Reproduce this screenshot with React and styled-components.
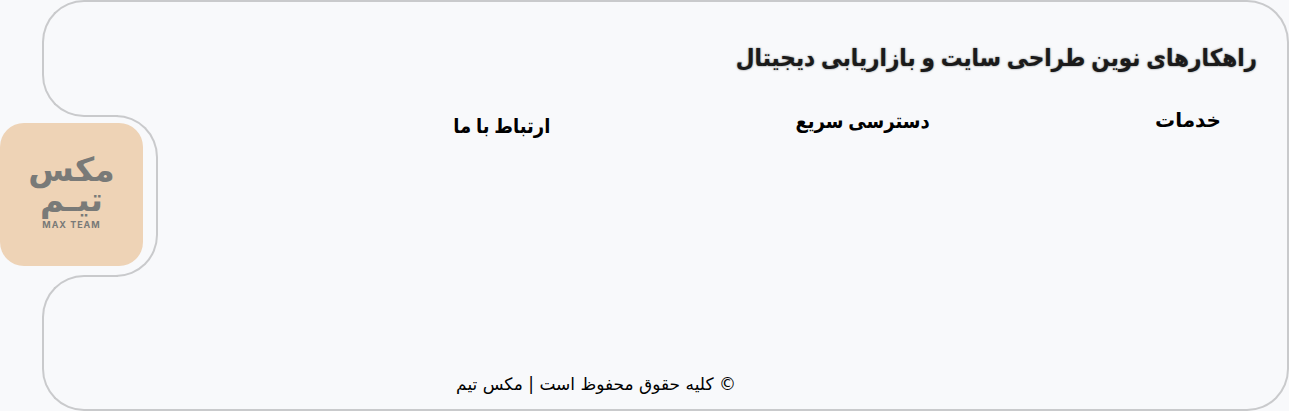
import React from "react";
import styled, { createGlobalStyle } from "styled-components";

const line = "#c9cacc";
const page = "#f8f9fb";
const persian = '"DejaVu Sans", "Noto Sans", sans-serif';
const heading = 'Lato, "DejaVu Sans Condensed", "DejaVu Sans", sans-serif';

const GlobalStyle = createGlobalStyle`
  *, *::before { box-sizing: border-box; }
  body { margin: 0; background: ${page}; color: #000; font-family: ${persian}; }
`;

const Footer = styled.footer`
  display: grid;
  grid-template-columns: 118px 1fr;
  min-height: 411px;
`;

const Side = styled.div`
  display: flex;
  flex-direction: column;
`;

const Tab = styled.div`
  margin-left: 42px;
  border: 2px solid ${line};
  border-right: 0;
  border-radius: 42px 0 0 42px;
  ${(p) => (p.$fill ? "flex: 1;" : "height: 117px;")}
`;

const Notch = styled.div`
  position: relative;
  width: 158px;
  height: 162px;
  margin: -2px 0;
  padding: 8px 0;

  &::before {
    content: "";
    position: absolute;
    inset: 0 0 0 116px;
    border: 2px solid ${line};
    border-left: 0;
    border-radius: 0 42px 42px 0;
  }
`;

const Logo = styled.a`
  position: relative;
  display: flex;
  flex-direction: column;
  align-items: center;
  width: 143px;
  height: 143px;
  padding-top: 32px;
  border-radius: 24px;
  background: #eed3b6;
  color: #797a78;
  font-weight: 700;
  text-decoration: none;
`;

const LogoWord = styled.span`
  font-size: 33px;
  line-height: 30px;
`;

const LogoLatin = styled.span`
  margin-top: 4px;
  font-family: Inter, sans-serif;
  font-size: 9px;
  line-height: 12px;
  letter-spacing: 1px;
`;

const Body = styled.div`
  display: flex;
  flex-direction: column;
  padding: 37px 30px 11px 32px;
  border: 2px solid ${line};
  border-left: 0;
  border-radius: 0 42px 42px 0;
`;

const Title = styled.h2`
  margin: 0;
  color: #1a1a1a;
  font-family: ${heading};
  font-size: 24px;
  line-height: 36px;
  text-shadow: 0 0 2px #666;
`;

const Columns = styled.div`
  display: grid;
  grid-template-columns: 291fr 379fr 400fr;
  align-items: start;
  padding: 27px 36px 0 0;
`;

const ColumnTitle = styled.h3`
  margin: 0;
  padding-top: ${(p) => (p.$lowered ? "5px" : "0")};
  font-family: ${(p) => (p.$wide ? persian : heading)};
  font-size: 20px;
  line-height: 36px;
`;

const Copyright = styled.p`
  margin: auto 0 0;
  padding-right: 215px;
  font-size: 17px;
  line-height: 28px;
  text-align: center;
`;

export default function App() {
  return (
    <>
      <GlobalStyle />
      <Footer lang="fa">
        <Side>
          <Tab />
          <Notch>
            <Logo href="#" dir="rtl">
              <LogoWord>مکس</LogoWord>
              <LogoWord>تیـم</LogoWord>
              <LogoLatin dir="ltr">MAX TEAM</LogoLatin>
            </Logo>
          </Notch>
          <Tab $fill />
        </Side>
        <Body dir="rtl">
          <Title>راهکارهای نوین طراحی سایت و بازاریابی دیجیتال</Title>
          <Columns>
            <ColumnTitle $wide>خدمات</ColumnTitle>
            <ColumnTitle>دسترسی سریع</ColumnTitle>
            <ColumnTitle $lowered>ارتباط با ما</ColumnTitle>
          </Columns>
          <Copyright>© کلیه حقوق محفوظ است | مکس تیم</Copyright>
        </Body>
      </Footer>
    </>
  );
}
